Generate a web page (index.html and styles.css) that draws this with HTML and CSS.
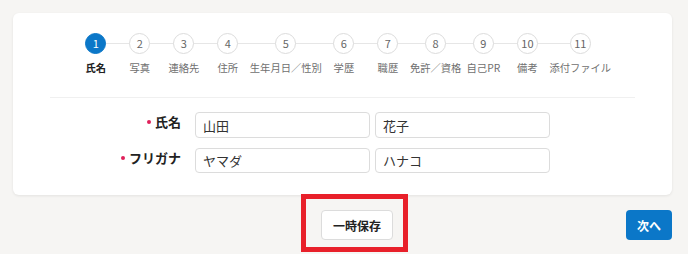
FILE: index.html
```html
<!DOCTYPE html>
<html lang="ja">
<head>
  <meta charset="UTF-8" />
  <title>エントリー - 氏名</title>
  <link rel="stylesheet" href="styles.css">
</head>
<body>

<main class="page">
  <section class="card">
    <ol class="steps">
      <li class="step active"><span class="num">1</span><span class="label">氏名</span></li>
      <li class="step"><span class="num">2</span><span class="label">写真</span></li>
      <li class="step"><span class="num">3</span><span class="label">連絡先</span></li>
      <li class="step"><span class="num">4</span><span class="label">住所</span></li>
      <li class="step"><span class="num">5</span><span class="label">生年月日／性別</span></li>
      <li class="step"><span class="num">6</span><span class="label">学歴</span></li>
      <li class="step"><span class="num">7</span><span class="label">職歴</span></li>
      <li class="step"><span class="num">8</span><span class="label">免許／資格</span></li>
      <li class="step"><span class="num">9</span><span class="label">自己PR</span></li>
      <li class="step"><span class="num">10</span><span class="label">備考</span></li>
      <li class="step"><span class="num">11</span><span class="label">添付ファイル</span></li>
    </ol>

    <div class="form">
      <div class="row">
        <label class="field-label required">氏名</label>
        <input class="text" type="text" value="山田">
        <input class="text" type="text" value="花子">
      </div>
      <div class="row">
        <label class="field-label required">フリガナ</label>
        <input class="text" type="text" value="ヤマダ">
        <input class="text" type="text" value="ハナコ">
      </div>
    </div>
  </section>

  <div class="actions">
    <div class="save-wrap">
      <button class="save-btn">一時保存</button>
      <span class="highlight"></span>
    </div>
    <button class="next-btn">次へ</button>
  </div>
</main>

</body>
</html>
```

FILE: styles.css
```css
/* Entry form - step 1 */
:root {
  --bg-color: #f6f5f3;
  --card-bg: #fff;
  --blue: #0b77c8;
  --line: #e6e6e6;
  --border: #dcdcdc;
  --text-color: #333;
  --muted: #707070;
  --font-family: 'Noto Sans CJK JP', 'Noto Sans', sans-serif;
}

* {
  box-sizing: border-box;
  margin: 0;
  padding: 0;
  font-family: var(--font-family);
}

body {
  background: var(--bg-color);
  color: var(--text-color);
  min-height: 100vh;
}

.page {
  padding: 13px 16px 0 13px;
  min-height: 254px;
}

.card {
  background: var(--card-bg);
  border-radius: 6px;
  box-shadow: 0 1px 3px rgba(0, 0, 0, 0.08);
  padding: 20px 0 21px;
  height: 182px;
}

/* stepper */
.steps {
  list-style: none;
  display: flex;
  justify-content: center;
}

.step {
  position: relative;
  min-width: 44px;
  display: flex;
  flex-direction: column;
  align-items: center;
}

.step::before,
.step::after {
  content: '';
  position: absolute;
  top: 10px;
  height: 1px;
  background: var(--line);
}

.step::before { left: 0; right: 50%; }
.step::after { left: 50%; right: 0; }
.step:first-child::before,
.step:last-child::after { display: none; }

.num {
  position: relative;
  z-index: 1;
  width: 21px;
  height: 21px;
  border-radius: 50%;
  border: 1px solid var(--border);
  background: #fff;
  color: #666;
  font-size: 11px;
  line-height: 19px;
  text-align: center;
}

.label {
  margin-top: 6px;
  font-size: 10.3px;
  line-height: 16px;
  color: #6f6f6f;
  white-space: nowrap;
}

.active .num {
  background: var(--blue);
  border-color: var(--blue);
  color: #fff;
}

.active .label {
  color: #222;
  font-weight: bold;
}

/* form */
.form {
  margin: 21px 37px 0 37px;
  padding-top: 14px;
  border-top: 1px solid #f0f0f0;
}

.row {
  display: flex;
  align-items: flex-start;
  gap: 5px;
  margin-bottom: 10px;
}

.field-label {
  width: 131px;
  margin-right: 9px;
  text-align: right;
  font-size: 13px;
  font-weight: bold;
  color: #222;
}

.required::before {
  content: '';
  display: inline-block;
  width: 4px;
  height: 4px;
  border-radius: 50%;
  background: #e0205a;
  margin-right: 4px;
  vertical-align: 3px;
}

.text {
  width: 175px;
  height: 26px;
  border: 1px solid var(--border);
  border-radius: 4px;
  padding: 0 7px;
  font-size: 13px;
  color: var(--text-color);
  background: #fff;
}

.row + .row .text { height: 25px; }

/* bottom actions */
.actions {
  display: flex;
  align-items: center;
  padding-top: 15px;
}

.save-wrap {
  position: relative;
  margin-left: 308px;
}

.save-btn {
  display: block;
  width: 72px;
  height: 30px;
  background: #fff;
  border: 1px solid var(--border);
  border-radius: 4px;
  font-size: 12px;
  font-weight: bold;
  color: #222;
}

.highlight {
  position: absolute;
  left: -20px;
  top: -16px;
  width: 107px;
  height: 58px;
  border: 5px solid #e8202a;
}

.next-btn {
  margin-left: auto;
  width: 46px;
  height: 30px;
  background: var(--blue);
  border: none;
  border-radius: 4px;
  color: #fff;
  font-size: 12px;
  font-weight: bold;
}
```
